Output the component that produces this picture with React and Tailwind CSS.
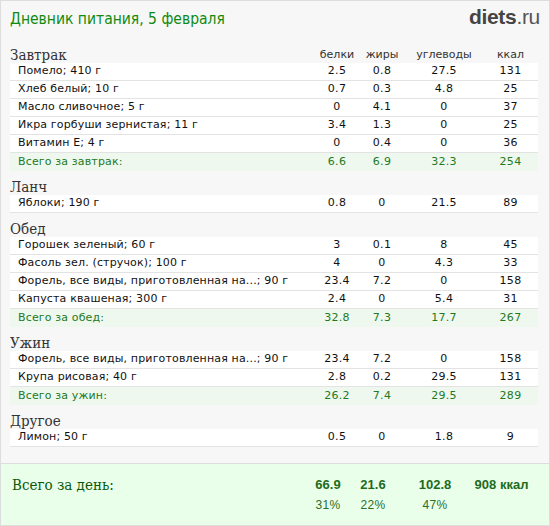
const sections = [
  {
    title: 'Завтрак',
    rows: [
      ['Помело; 410 г', '2.5', '0.8', '27.5', '131'],
      ['Хлеб белый; 10 г', '0.7', '0.3', '4.8', '25'],
      ['Масло сливочное; 5 г', '0', '4.1', '0', '37'],
      ['Икра горбуши зернистая; 11 г', '3.4', '1.3', '0', '25'],
      ['Витамин Е; 4 г', '0', '0.4', '0', '36'],
    ],
    total: ['Всего за завтрак:', '6.6', '6.9', '32.3', '254'],
  },
  {
    title: 'Ланч',
    rows: [['Яблоки; 190 г', '0.8', '0', '21.5', '89']],
  },
  {
    title: 'Обед',
    rows: [
      ['Горошек зеленый; 60 г', '3', '0.1', '8', '45'],
      ['Фасоль зел. (стручок); 100 г', '4', '0', '4.3', '33'],
      ['Форель, все виды, приготовленная на...; 90 г', '23.4', '7.2', '0', '158'],
      ['Капуста квашеная; 300 г', '2.4', '0', '5.4', '31'],
    ],
    total: ['Всего за обед:', '32.8', '7.3', '17.7', '267'],
  },
  {
    title: 'Ужин',
    rows: [
      ['Форель, все виды, приготовленная на...; 90 г', '23.4', '7.2', '0', '158'],
      ['Крупа рисовая; 40 г', '2.8', '0.2', '29.5', '131'],
    ],
    total: ['Всего за ужин:', '26.2', '7.4', '29.5', '289'],
  },
  {
    title: 'Другое',
    rows: [['Лимон; 50 г', '0.5', '0', '1.8', '9']],
  },
];

const cols = ['w-[44px]', 'w-[46px]', 'w-[78px]', 'w-[55px]'];

function Row({ cells, total }) {
  return (
    <div
      className={`flex h-[18px] items-center ${
        total ? 'bg-[#eef8ee] text-[#237a23]' : 'bg-white text-[#111] border-b border-[#e3e3e3]'
      }`}
    >
      <div className="flex-1 pl-[8px] whitespace-nowrap tracking-[0.15px]">{cells[0]}</div>
      {cells.slice(1).map((c, i) => (
        <div key={i} className={`${cols[i]} text-center tracking-[0.3px]`}>
          {c}
        </div>
      ))}
    </div>
  );
}

export default function App() {
  return (
    <div className="w-[550px] h-[526px] border border-[#dddddd] bg-[#f7f7f7] flex flex-col overflow-hidden">
      <div className="flex justify-between items-center px-[9px] h-[38px]">
        <h1 className="text-[15.5px] text-[#108a10] font-['DejaVu_Sans_Condensed','DejaVu_Sans',sans-serif]">
          Дневник питания, 5 февраля
        </h1>
        <div className="font-['Liberation_Sans',sans-serif] text-[21px] text-[#444] -mt-[6px] tracking-[-0.3px]">
          <span className="font-bold">diets</span>
          <span className="text-[#555]">.ru</span>
        </div>
      </div>

      <div className="pl-[9px] pr-[11px] text-[11px] font-['DejaVu_Sans',sans-serif] mt-[6px]">
        {sections.map((s, si) => (
          <div key={si} className={si ? 'mt-[6px]' : ''}>
            <div className="flex h-[18px] items-center">
              <div className="flex-1 font-['DejaVu_Serif_Condensed','DejaVu_Serif',serif] text-[15px] text-[#333] leading-none pt-[3px]">
                {s.title}
              </div>
              {si === 0 &&
                ['белки', 'жиры', 'углеводы', 'ккал'].map((h, i) => (
                  <div key={h} className={`${cols[i]} text-center text-[#333] pt-[3px]`}>
                    {h}
                  </div>
                ))}
            </div>
            {s.rows.map((r, ri) => (
              <Row key={ri} cells={r} />
            ))}
            {s.total && <Row cells={s.total} total />}
          </div>
        ))}
      </div>

      <div className="mt-[16px] flex-1 bg-[#eaffea] border-t border-[#dddddd] px-[9px] pt-[10px]">
        <div className="flex items-center h-[22px]">
          <div className="flex-1 font-['DejaVu_Serif_Condensed','DejaVu_Serif',serif] text-[15px] text-[#0b5a0b] pl-[2px]">
            Всего за день:
          </div>
          <div className="flex font-['Liberation_Sans',sans-serif] font-bold text-[13px] text-[#1d6b1d] pr-[11px]">
            <div className="w-[44px] text-center">66.9</div>
            <div className="w-[46px] text-center">21.6</div>
            <div className="w-[78px] text-center">102.8</div>
            <div className="w-[55px] text-center whitespace-nowrap">908 ккал</div>
          </div>
        </div>
        <div className="flex h-[18px] items-center justify-end pr-[11px] font-['Liberation_Sans',sans-serif] text-[12px] text-[#2a6e2a] tracking-[0.3px]">
          <div className="w-[44px] text-center">31%</div>
          <div className="w-[46px] text-center">22%</div>
          <div className="w-[78px] text-center">47%</div>
          <div className="w-[55px]"></div>
        </div>
      </div>
    </div>
  );
}
